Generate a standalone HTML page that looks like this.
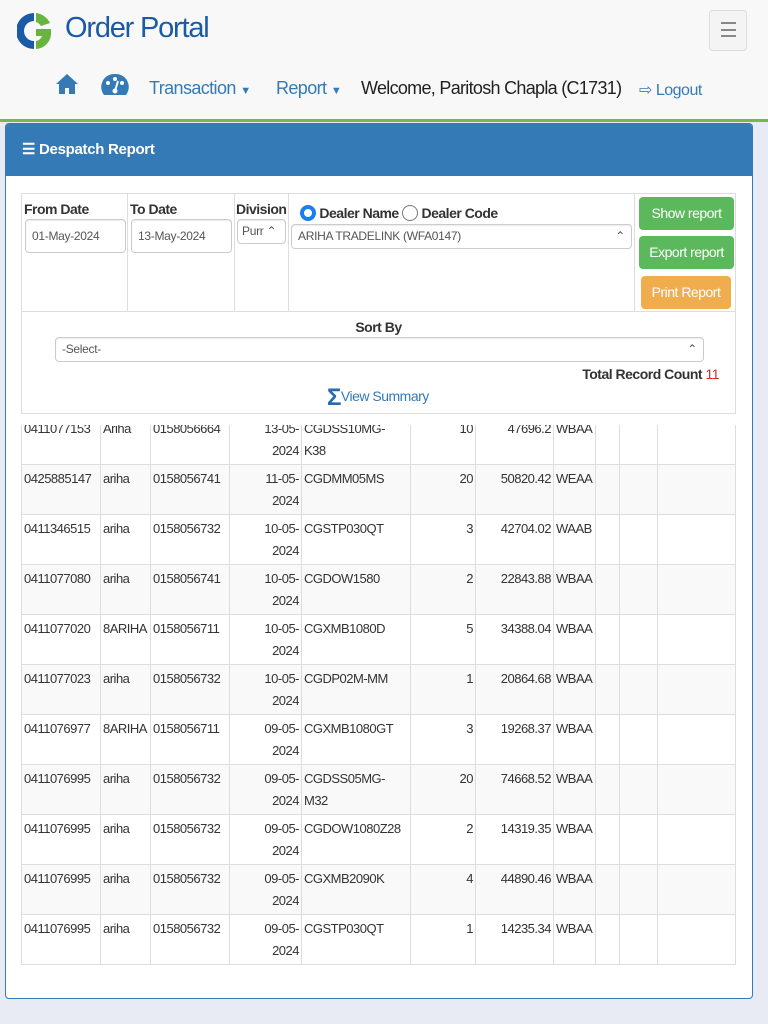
<!DOCTYPE html>
<html><head><meta charset="utf-8"><style>
*{box-sizing:border-box;margin:0;padding:0}
body{width:768px;height:1024px;background:#e8ebf3;font-family:"Liberation Sans",Arial,sans-serif;position:relative;overflow:hidden;color:#333;letter-spacing:-0.3px}
.hdr{position:absolute;left:0;top:0;width:768px;height:122px;background:#f8f8f8;border-bottom:3px solid #7ab648}
.abs{position:absolute}
.panel{position:absolute;left:5px;top:123px;width:748px;height:876px;background:#fff;border:1px solid #337ab7;border-radius:4px;overflow:hidden}
.ph{height:52px;background:#337ab7;color:#fff;font-weight:bold;font-size:15px;padding:16px 0 0 16px}
.form{position:absolute;left:21px;top:193px;width:715px;height:221px;border:1px solid #ddd}
.lbl{font-weight:bold;font-size:14px;color:#333;position:absolute;letter-spacing:-0.5px}
.inp{position:absolute;border:1px solid #ccc;border-radius:4px;background:#fff;font-size:12px;color:#555;padding-left:6px;box-shadow:inset 0 1px 1px rgba(0,0,0,.08)}
.btn{position:absolute;border-radius:4px;color:#fff;font-size:14px;text-align:center;letter-spacing:-0.5px}
table{position:absolute;left:0;top:-11px;width:714px;border-collapse:collapse;font-size:13px;table-layout:fixed;letter-spacing:-0.5px}
td{border:1px solid #ddd;height:50px;vertical-align:top;padding:3px 2px 0;line-height:22px;white-space:nowrap;overflow:hidden}
tr:nth-child(even) td{background:#f9f9f9}
.r{text-align:right}
</style></head><body>
<div class="hdr">
 <svg class="abs" style="left:17px;top:11px" width="34" height="40" viewBox="0 0 34 40"><path d="M17 2A18 18 0 1 0 17 38L17 30A10 10 0 1 1 17 10Z" fill="#1a5aa6"/><path d="M19 2A18 18 0 0 1 33 12L24 15A10 10 0 0 0 19 11Z M19 18H34V24A16 16 0 0 1 19 38V30A8 8 0 0 0 25 25H19Z" fill="#6ab43e"/></svg>
 <div class="abs" style="left:65px;top:12px;font-size:29px;color:#1a5aa6;letter-spacing:-1.2px">Order Portal</div>
 <div class="abs" style="left:709px;top:10px;width:38px;height:41px;border:1px solid #ddd;border-radius:4px;background:#f4f4f4"><div style="margin:11px 0 0 11px;width:15px;height:15px;border-top:2px solid #888;border-bottom:2px solid #888;position:relative"><div style="position:absolute;top:4.5px;width:15px;height:2px;background:#888"></div></div></div>
 <svg class="abs" style="left:55px;top:73px" width="24" height="22" viewBox="0 0 24 22"><path d="M12 1L1 11h3v10h6v-6h4v6h6V11h3z" fill="#337ab7"/></svg>
 <svg class="abs" style="left:101px;top:73px" width="28" height="24" viewBox="0 0 28 24"><path d="M14 1A13 13 0 0 0 3 22H25A13 13 0 0 0 14 1Z" fill="#337ab7"/><circle cx="14" cy="6" r="2" fill="#fff"/><circle cx="7" cy="10" r="2" fill="#fff"/><circle cx="21" cy="10" r="2" fill="#fff"/><circle cx="14" cy="18" r="2.5" fill="#fff"/><path d="M14 18L17 8" stroke="#fff" stroke-width="2"/></svg>
 <div class="abs" style="left:149px;top:78px;font-size:18px;color:#337ab7;letter-spacing:-0.6px;font-weight:bold;font-weight:500">Transaction <span style="font-size:11px">▼</span></div>
 <div class="abs" style="left:276px;top:78px;font-size:18px;color:#337ab7;letter-spacing:-0.6px">Report <span style="font-size:11px">▼</span></div>
 <div class="abs" style="left:361px;top:78px;font-size:18px;color:#222;letter-spacing:-0.7px">Welcome, Paritosh Chapla (C1731)</div>
 <div class="abs" style="left:639px;top:80px;font-size:16px;color:#337ab7;letter-spacing:-0.5px">⇨ Logout</div>
</div>
<div class="panel"><div class="ph">☰ Despatch Report</div></div>
<div class="form">
 <div class="abs" style="left:105px;top:0;width:1px;height:117px;background:#ddd"></div>
 <div class="abs" style="left:212px;top:0;width:1px;height:117px;background:#ddd"></div>
 <div class="abs" style="left:266px;top:0;width:1px;height:117px;background:#ddd"></div>
 <div class="abs" style="left:612px;top:0;width:1px;height:117px;background:#ddd"></div>
 <div class="abs" style="left:0;top:117px;width:713px;height:1px;background:#ddd"></div>
 <div class="abs" style="left:0;top:0;width:612px;height:117px;background:#f7f7f7;z-index:-1"></div>
 <div class="lbl" style="left:2px;top:7px">From Date</div>
 <div class="lbl" style="left:108px;top:7px">To Date</div>
 <div class="lbl" style="left:214px;top:7px">Division</div>
 <div class="lbl" style="left:278px;top:11px"><span style="display:inline-block;width:16px;height:16px;border:4px solid #1a7df0;border-radius:50%;vertical-align:-3px"></span> Dealer Name <span style="display:inline-block;width:16px;height:16px;border:1px solid #777;border-radius:50%;vertical-align:-3px"></span> Dealer Code</div>
 <div class="inp" style="left:3px;top:25px;width:101px;height:34px;line-height:32px">01-May-2024</div>
 <div class="inp" style="left:109px;top:25px;width:101px;height:34px;line-height:32px">13-May-2024</div>
 <div class="inp" style="left:215px;top:25px;width:49px;height:25px;line-height:23px;padding-left:4px">Purr ⌃</div>
 <div class="inp" style="left:269px;top:30px;width:341px;height:25px;line-height:23px">ARIHA TRADELINK (WFA0147)<span style="position:absolute;right:6px">⌃</span></div>
 <div class="btn" style="left:617px;top:3px;width:95px;height:33px;line-height:33px;background:#5cb85c">Show report</div>
 <div class="btn" style="left:617px;top:42px;width:95px;height:33px;line-height:33px;background:#5cb85c">Export report</div>
 <div class="btn" style="left:619px;top:82px;width:90px;height:33px;line-height:33px;background:#f0ad4e">Print Report</div>
 <div class="lbl" style="left:0;width:713px;text-align:center;top:125px">Sort By</div>
 <div class="inp" style="left:33px;top:143px;width:649px;height:25px;line-height:23px">-Select-<span style="position:absolute;right:6px">⌃</span></div>
 <div class="lbl" style="right:16px;top:172px">Total Record Count <span style="color:#c9302c;font-weight:normal">11</span></div>
 <div class="abs" style="left:305px;top:190px;font-size:14px;color:#337ab7;letter-spacing:-0.5px"><b style="font-size:24px;color:#2a6ab0;vertical-align:-4px">Σ</b>View Summary</div>
</div>
<div class="abs" style="left:21px;top:425px;width:716px;height:540px;overflow:hidden">
<table>
<colgroup><col style="width:79px"><col style="width:50px"><col style="width:79px"><col style="width:72px"><col style="width:109px"><col style="width:65px"><col style="width:78px"><col style="width:42px"><col style="width:24px"><col style="width:38px"><col style="width:78px"></colgroup>
<tr><td>0411077153</td><td>Ariha</td><td>0158056664</td><td class="r">13-05-<br>2024</td><td>CGDSS10MG-<br>K38</td><td class="r">10</td><td class="r">47696.2</td><td>WBAA</td><td></td><td></td><td></td></tr>
<tr><td>0425885147</td><td>ariha</td><td>0158056741</td><td class="r">11-05-<br>2024</td><td>CGDMM05MS</td><td class="r">20</td><td class="r">50820.42</td><td>WEAA</td><td></td><td></td><td></td></tr>
<tr><td>0411346515</td><td>ariha</td><td>0158056732</td><td class="r">10-05-<br>2024</td><td>CGSTP030QT</td><td class="r">3</td><td class="r">42704.02</td><td>WAAB</td><td></td><td></td><td></td></tr>
<tr><td>0411077080</td><td>ariha</td><td>0158056741</td><td class="r">10-05-<br>2024</td><td>CGDOW1580</td><td class="r">2</td><td class="r">22843.88</td><td>WBAA</td><td></td><td></td><td></td></tr>
<tr><td>0411077020</td><td>8ARIHA</td><td>0158056711</td><td class="r">10-05-<br>2024</td><td>CGXMB1080D</td><td class="r">5</td><td class="r">34388.04</td><td>WBAA</td><td></td><td></td><td></td></tr>
<tr><td>0411077023</td><td>ariha</td><td>0158056732</td><td class="r">10-05-<br>2024</td><td>CGDP02M-MM</td><td class="r">1</td><td class="r">20864.68</td><td>WBAA</td><td></td><td></td><td></td></tr>
<tr><td>0411076977</td><td>8ARIHA</td><td>0158056711</td><td class="r">09-05-<br>2024</td><td>CGXMB1080GT</td><td class="r">3</td><td class="r">19268.37</td><td>WBAA</td><td></td><td></td><td></td></tr>
<tr><td>0411076995</td><td>ariha</td><td>0158056732</td><td class="r">09-05-<br>2024</td><td>CGDSS05MG-<br>M32</td><td class="r">20</td><td class="r">74668.52</td><td>WBAA</td><td></td><td></td><td></td></tr>
<tr><td>0411076995</td><td>ariha</td><td>0158056732</td><td class="r">09-05-<br>2024</td><td>CGDOW1080Z28</td><td class="r">2</td><td class="r">14319.35</td><td>WBAA</td><td></td><td></td><td></td></tr>
<tr><td>0411076995</td><td>ariha</td><td>0158056732</td><td class="r">09-05-<br>2024</td><td>CGXMB2090K</td><td class="r">4</td><td class="r">44890.46</td><td>WBAA</td><td></td><td></td><td></td></tr>
<tr><td>0411076995</td><td>ariha</td><td>0158056732</td><td class="r">09-05-<br>2024</td><td>CGSTP030QT</td><td class="r">1</td><td class="r">14235.34</td><td>WBAA</td><td></td><td></td><td></td></tr>
</table></div>
</body></html>
